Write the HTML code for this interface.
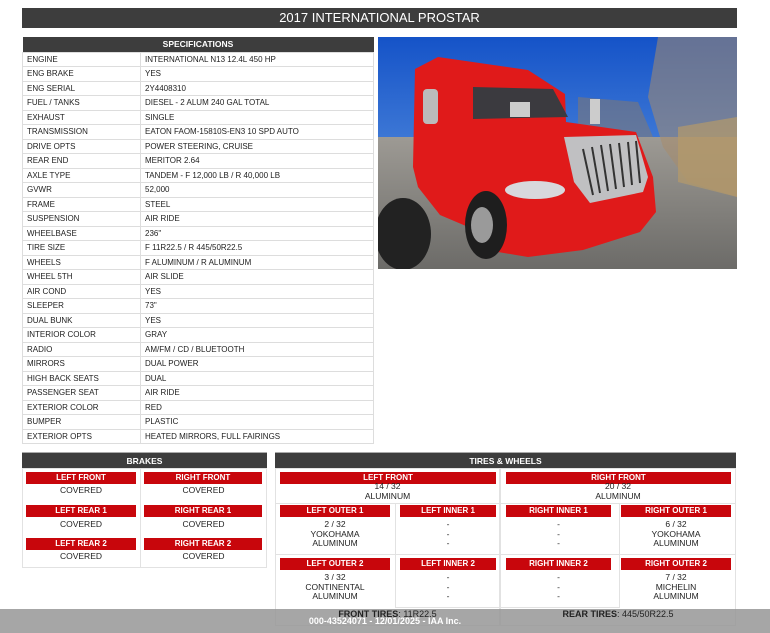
<!DOCTYPE html>
<html><head><meta charset="utf-8"><style>
*{margin:0;padding:0;box-sizing:border-box}
body{width:770px;height:633px;background:#fff;font-family:"Liberation Sans",Arial,sans-serif;position:relative;overflow:hidden;color:#222}
.abs{position:absolute}
.title{left:22px;top:8px;width:715px;height:20px;background:#3d3d3d;color:#fff;font-size:13px;text-align:center;line-height:20px}
table{border-collapse:collapse}
.spec{left:22px;top:37px;width:352px;font-size:8px}
.spec th{background:#3d3d3d;color:#fff;height:15px;font-size:8.5px;font-weight:bold}
.spec td{border:1px solid #ddd;height:14.5px;padding:0 4px;white-space:nowrap}
.spec td:first-child{width:118px}
.hdr{background:#3d3d3d;color:#fff;font-size:8.5px;font-weight:bold;text-align:center;height:16px;line-height:16px;border-top:1px solid #aaa}
.red{background:#c8060c;color:#fff;font-size:8px;font-weight:bold;text-align:center;height:12px;line-height:12px;position:absolute}
.v{position:absolute;font-size:8.5px;text-align:center;line-height:9.5px;color:#222}
.cellb{position:absolute;border:1px solid #e2e2e2}
</style></head><body>
<div class="abs title">2017 INTERNATIONAL PROSTAR</div>
<table class="abs spec">
<tr><th colspan="2">SPECIFICATIONS</th></tr>
<tr><td>ENGINE</td><td>INTERNATIONAL N13 12.4L 450 HP</td></tr>
<tr><td>ENG BRAKE</td><td>YES</td></tr>
<tr><td>ENG SERIAL</td><td>2Y4408310</td></tr>
<tr><td>FUEL / TANKS</td><td>DIESEL - 2 ALUM 240 GAL TOTAL</td></tr>
<tr><td>EXHAUST</td><td>SINGLE</td></tr>
<tr><td>TRANSMISSION</td><td>EATON FAOM-15810S-EN3 10 SPD AUTO</td></tr>
<tr><td>DRIVE OPTS</td><td>POWER STEERING, CRUISE</td></tr>
<tr><td>REAR END</td><td>MERITOR 2.64</td></tr>
<tr><td>AXLE TYPE</td><td>TANDEM - F 12,000 LB / R 40,000 LB</td></tr>
<tr><td>GVWR</td><td>52,000</td></tr>
<tr><td>FRAME</td><td>STEEL</td></tr>
<tr><td>SUSPENSION</td><td>AIR RIDE</td></tr>
<tr><td>WHEELBASE</td><td>236"</td></tr>
<tr><td>TIRE SIZE</td><td>F 11R22.5 / R 445/50R22.5</td></tr>
<tr><td>WHEELS</td><td>F ALUMINUM / R ALUMINUM</td></tr>
<tr><td>WHEEL 5TH</td><td>AIR SLIDE</td></tr>
<tr><td>AIR COND</td><td>YES</td></tr>
<tr><td>SLEEPER</td><td>73"</td></tr>
<tr><td>DUAL BUNK</td><td>YES</td></tr>
<tr><td>INTERIOR COLOR</td><td>GRAY</td></tr>
<tr><td>RADIO</td><td>AM/FM / CD / BLUETOOTH</td></tr>
<tr><td>MIRRORS</td><td>DUAL POWER</td></tr>
<tr><td>HIGH BACK SEATS</td><td>DUAL</td></tr>
<tr><td>PASSENGER SEAT</td><td>AIR RIDE</td></tr>
<tr><td>EXTERIOR COLOR</td><td>RED</td></tr>
<tr><td>BUMPER</td><td>PLASTIC</td></tr>
<tr><td>EXTERIOR OPTS</td><td>HEATED MIRRORS, FULL FAIRINGS</td></tr>
</table>

<svg class="abs" style="left:378px;top:37px" width="359" height="232" viewBox="0 0 359 232">
<defs><linearGradient id="sky" x1="0" y1="0" x2="0" y2="1"><stop offset="0" stop-color="#1553c8"/><stop offset="1" stop-color="#6fa5e6"/></linearGradient>
<linearGradient id="gr" x1="0" y1="0" x2="0" y2="1"><stop offset="0" stop-color="#9d9a94"/><stop offset="1" stop-color="#6c6b68"/></linearGradient></defs>
<rect width="359" height="232" fill="url(#sky)"/>
<rect y="100" width="359" height="132" fill="url(#gr)"/>
<path d="M280 0 L359 0 L359 160 L310 145 L285 110 L270 60 Z" fill="#a88d6c" opacity="0.55"/>
<path d="M300 90 L359 80 L359 160 L300 145Z" fill="#b59a6a" opacity="0.7"/>
<path d="M200 60 L260 65 L275 100 L200 100Z" fill="#8c7a66" opacity="0.5"/>
<ellipse cx="25" cy="197" rx="28" ry="36" fill="#222"/>
<path d="M37 32 L60 20 L150 33 L187 57 L188 85 L258 95 L275 140 L278 175 L262 195 L205 213 L150 220 L120 215 L95 192 L62 178 L40 150 L35 130 Z" fill="#e01a1a"/>
<path d="M95 50 L175 52 L190 80 L95 82 Z" fill="#3b3a3f"/>
<path d="M186 100 L258 98 L270 140 L265 155 L212 166 L196 145 Z" fill="#c0c0c2"/>
<g stroke="#333" stroke-width="2"><line x1="205" y1="112" x2="215" y2="158"/><line x1="214" y1="110" x2="222" y2="156"/><line x1="223" y1="108" x2="230" y2="154"/><line x1="232" y1="107" x2="238" y2="152"/><line x1="241" y1="106" x2="246" y2="150"/><line x1="250" y1="105" x2="254" y2="148"/><line x1="258" y1="104" x2="262" y2="146"/></g>
<ellipse cx="157" cy="153" rx="30" ry="9" fill="#d8d8dc"/>
<ellipse cx="108" cy="188" rx="21" ry="34" fill="#1e1e1e"/>
<ellipse cx="104" cy="188" rx="11" ry="18" fill="#9a9a9a"/>
<rect x="45" y="52" width="15" height="35" rx="4" fill="#bbb"/>
<rect x="132" y="65" width="20" height="15" fill="#ccc"/>
<rect x="212" y="62" width="10" height="25" fill="#ccc"/>
</svg>

<!-- BRAKES -->
<div class="abs hdr" style="left:22px;top:452px;width:245px">BRAKES</div>
<div class="cellb" style="left:22px;top:468px;width:119px;height:100px"></div>
<div class="cellb" style="left:140px;top:468px;width:127px;height:100px"></div>
<div class="red" style="left:26px;top:472px;width:110px">LEFT FRONT</div>
<div class="red" style="left:144px;top:472px;width:118px">RIGHT FRONT</div>
<div class="v" style="left:22px;top:486px;width:118px">COVERED</div>
<div class="v" style="left:140px;top:486px;width:127px">COVERED</div>
<div class="red" style="left:26px;top:505px;width:110px">LEFT REAR 1</div>
<div class="red" style="left:144px;top:505px;width:118px">RIGHT REAR 1</div>
<div class="v" style="left:22px;top:520px;width:118px">COVERED</div>
<div class="v" style="left:140px;top:520px;width:127px">COVERED</div>
<div class="red" style="left:26px;top:538px;width:110px">LEFT REAR 2</div>
<div class="red" style="left:144px;top:538px;width:118px">RIGHT REAR 2</div>
<div class="v" style="left:22px;top:552px;width:118px">COVERED</div>
<div class="v" style="left:140px;top:552px;width:127px">COVERED</div>

<!-- TIRES -->
<div class="abs hdr" style="left:275px;top:452px;width:461px">TIRES &amp; WHEELS</div>
<div class="cellb" style="left:275px;top:468px;width:225px;height:158px"></div>
<div class="cellb" style="left:500px;top:468px;width:236px;height:158px"></div>
<div class="cellb" style="left:275px;top:503px;width:461px;height:52px"></div>
<div class="cellb" style="left:395px;top:503px;width:225px;height:105px"></div>
<div class="red" style="left:280px;top:472px;width:216px">LEFT FRONT</div>
<div class="red" style="left:506px;top:472px;width:225px">RIGHT FRONT</div>
<div class="v" style="left:275px;top:482px;width:225px">14 / 32<br>ALUMINUM</div>
<div class="v" style="left:500px;top:482px;width:236px">20 / 32<br>ALUMINUM</div>
<div class="red" style="left:280px;top:505px;width:110px">LEFT OUTER 1</div>
<div class="red" style="left:400px;top:505px;width:96px">LEFT INNER 1</div>
<div class="red" style="left:506px;top:505px;width:105px">RIGHT INNER 1</div>
<div class="red" style="left:621px;top:505px;width:110px">RIGHT OUTER 1</div>
<div class="v" style="left:280px;top:520px;width:110px">2 / 32<br>YOKOHAMA<br>ALUMINUM</div>
<div class="v" style="left:400px;top:520px;width:96px">-<br>-<br>-</div>
<div class="v" style="left:506px;top:520px;width:105px">-<br>-<br>-</div>
<div class="v" style="left:621px;top:520px;width:110px">6 / 32<br>YOKOHAMA<br>ALUMINUM</div>
<div class="red" style="left:280px;top:558px;width:110px">LEFT OUTER 2</div>
<div class="red" style="left:400px;top:558px;width:96px">LEFT INNER 2</div>
<div class="red" style="left:506px;top:558px;width:105px">RIGHT INNER 2</div>
<div class="red" style="left:621px;top:558px;width:110px">RIGHT OUTER 2</div>
<div class="v" style="left:280px;top:573px;width:110px">3 / 32<br>CONTINENTAL<br>ALUMINUM</div>
<div class="v" style="left:400px;top:573px;width:96px">-<br>-<br>-</div>
<div class="v" style="left:506px;top:573px;width:105px">-<br>-<br>-</div>
<div class="v" style="left:621px;top:573px;width:110px">7 / 32<br>MICHELIN<br>ALUMINUM</div>

<div class="abs" style="left:0;top:609px;width:770px;height:24px;background:rgba(150,150,150,0.85)"></div>
<div class="v" style="left:275px;top:610px;width:225px;font-size:9px"><b>FRONT TIRES</b>: 11R22.5</div>
<div class="v" style="left:500px;top:610px;width:236px;font-size:9px"><b>REAR TIRES</b>: 445/50R22.5</div>
<div class="v" style="left:0;top:617px;width:770px;color:#fff;font-weight:bold;font-size:9px">000-43524071 - 12/01/2025 - IAA Inc.</div>
</body></html>
